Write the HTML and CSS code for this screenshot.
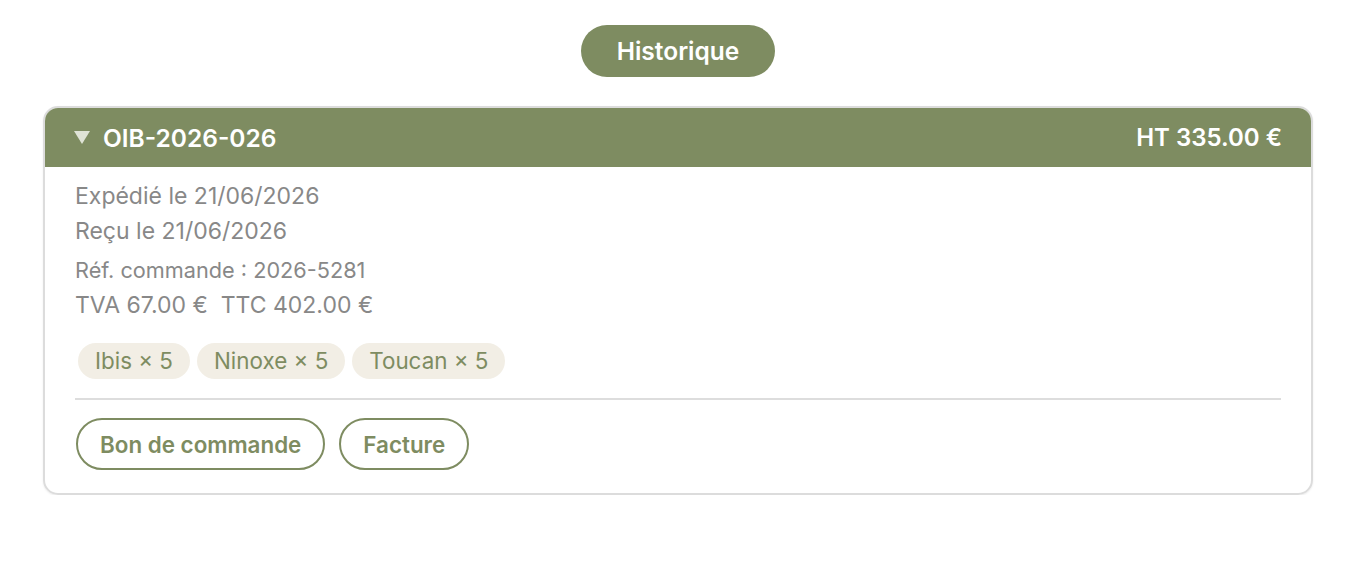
FILE: index.html
```html
<!DOCTYPE html>
<html lang="fr">
<head>
<meta charset="utf-8">
<link rel="stylesheet" href="styles.css">
</head>
<body>
<div class="page">
  <div class="top"><button class="hist">Historique</button></div>
  <div class="card">
    <div class="head">
      <div class="title"><svg class="tri" width="16" height="13" viewBox="0 0 16 13"><polygon points="0,0 16,0 8,13" fill="#dfe3d6"/></svg>OIB-2026-026</div>
      <div class="total">HT 335.00 €</div>
    </div>
    <div class="body">
      <div class="line">Expédié le 21/06/2026</div>
      <div class="line">Reçu le 21/06/2026</div>
      <div class="line small">Réf. commande : 2026-5281</div>
      <div class="line">TVA 67.00 €&nbsp; TTC 402.00 €</div>
      <div class="chips">
        <span class="chip">Ibis × 5</span>
        <span class="chip">Ninoxe × 5</span>
        <span class="chip">Toucan × 5</span>
      </div>
      <div class="divider"></div>
      <div class="actions">
        <button class="outline">Bon de commande</button>
        <button class="outline">Facture</button>
      </div>
    </div>
  </div>
</div>
</body>
</html>
```
FILE: styles.css
```css
* { box-sizing: border-box; }
html, body { margin: 0; background: #fff; }
body { font-family: Inter, "Noto Sans", sans-serif; }
.page { padding: 25px 41px 0 43px; }
.top { display: flex; justify-content: center; }
.hist {
  font-family: inherit;
  background: #7e8c61;
  color: #fff;
  border: none;
  border-radius: 26px;
  height: 52px;
  width: 194px;
  padding: 0;
  font-size: 24.5px;
  font-weight: 600;
  cursor: pointer;
}
.card {
  margin-top: 29px;
  border: 2px solid #dcdcdc;
  border-radius: 15px;
  overflow: hidden;
  box-shadow: 0 1px 2px rgba(0,0,0,0.08);
}
.head {
  background: #7e8c61;
  color: #fff;
  height: 59px;
  display: flex;
  align-items: center;
  justify-content: space-between;
  padding: 0 29px 0 29px;
  font-size: 24.5px;
  font-weight: 600;
}
.title { display: flex; align-items: center; }
.total { font-size: 24px; }
.tri { margin-right: 13px; }
.body { padding: 12px 30px 23px 30px; }
.line { color: #888; font-size: 23px; line-height: 35px; }
.line.small { font-size: 21.7px; margin-top: 4px; }
.chips { display: flex; gap: 7px; margin-top: 20px; padding-left: 3px; }
.chip {
  background: #f2eee5;
  color: #7e8c61;
  font-size: 22.4px;
  height: 36px;
  line-height: 36px;
  padding: 0 17px;
  border-radius: 18px;
}
.divider { height: 2px; background: #dddddd; margin-top: 19px; }
.actions { display: flex; gap: 14px; margin-top: 18px; padding-left: 1px; }
.outline {
  font-family: inherit;
  background: #fff;
  color: #7e8c61;
  border: 2.5px solid #7e8c61;
  border-radius: 26px;
  height: 52px;
  padding: 0 22px;
  font-size: 22.4px;
  font-weight: 600;
  cursor: pointer;
}
```
